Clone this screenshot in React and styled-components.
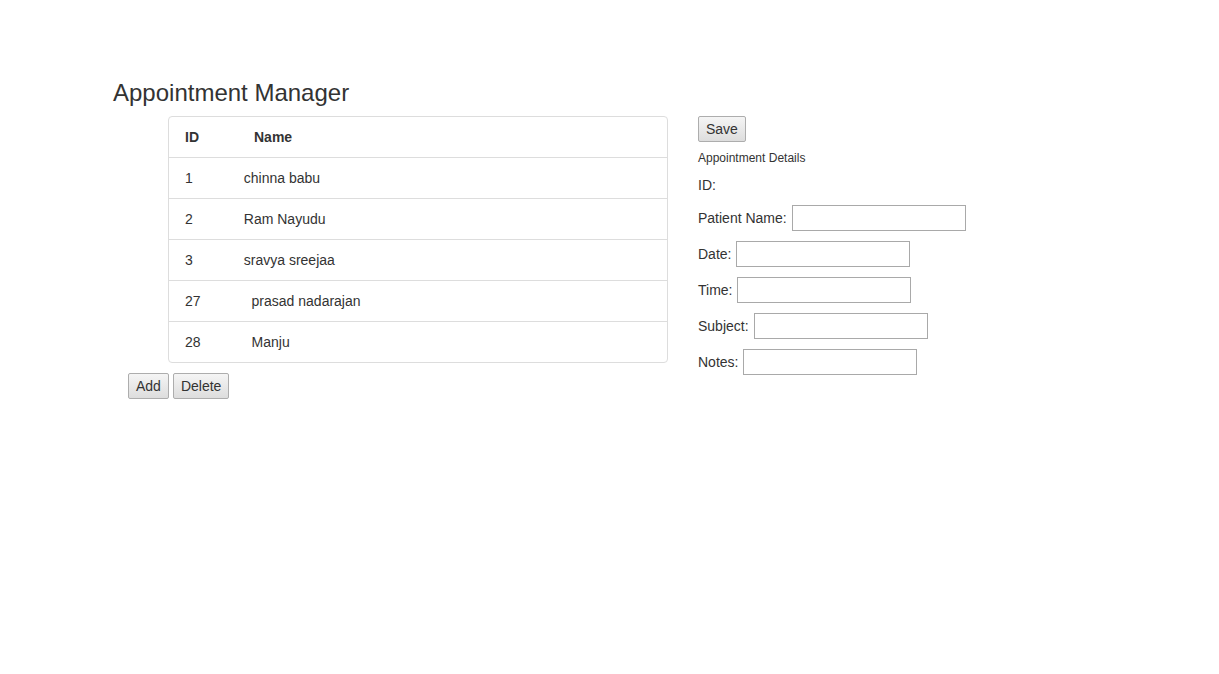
import React from "react";
import styled, { createGlobalStyle } from "styled-components";

const Global = createGlobalStyle`
  html, body { margin: 0; padding: 0; background: #fff; }
  body {
    font-family: "Liberation Sans", Arial, Helvetica, sans-serif;
    font-size: 14px;
    line-height: 20px;
    color: #333;
  }
  * { box-sizing: border-box; }
`;

const Page = styled.div`
  padding: 80px 0 0 113px;
`;

const Title = styled.h1`
  margin: 0 0 10px 0;
  font-size: 24px;
  font-weight: 400;
  line-height: 26px;
  color: #333;
`;

const Columns = styled.div`
  display: flex;
  align-items: flex-start;
`;

const LeftCol = styled.div`
  display: flex;
  flex-direction: column;
  padding-left: 15px;
`;

const TableBox = styled.div`
  margin-left: 40px;
  width: 500px;
  border: 1px solid #ddd;
  border-radius: 4px;
  overflow: hidden;
`;

const Row = styled.div`
  display: flex;
  align-items: center;
  gap: ${(p) => (p.$head ? "55px" : "51px")};
  height: ${(p) => (p.$head ? "40px" : "41px")};
  padding-left: 16px;
  border-top: ${(p) => (p.$head ? "none" : "1px solid #ddd")};
  font-weight: ${(p) => (p.$head ? 700 : 400)};
`;

const Cell = styled.span`
  white-space: nowrap;
`;

const ButtonRow = styled.div`
  display: flex;
  gap: 4px;
  margin-top: 10px;
`;

const Btn = styled.button`
  height: 26px;
  padding: 0 7px;
  font-family: "Liberation Sans", Arial, sans-serif;
  font-size: 14px;
  color: #333;
  background: linear-gradient(#f5f5f5, #dddddd);
  border: 1px solid #adadad;
  border-radius: 2px;
  cursor: pointer;
`;

const RightCol = styled.div`
  display: flex;
  flex-direction: column;
  align-items: flex-start;
  margin-left: 30px;
`;

const Caption = styled.div`
  font-size: 12px;
  line-height: 17px;
  margin-top: 8px;
`;

const IdLine = styled.div`
  margin-top: 8px;
  line-height: 20px;
`;

const FieldList = styled.div`
  display: flex;
  flex-direction: column;
  gap: 10px;
  margin-top: 10px;
`;

const Field = styled.label`
  display: flex;
  align-items: center;
  gap: 5px;
  height: 26px;
`;

const Input = styled.input`
  width: 174px;
  height: 26px;
  margin: 0;
  border: 1px solid #a9a9a9;
  font-family: "Liberation Sans", Arial, sans-serif;
  font-size: 14px;
  padding: 2px 4px;
  background: #fff;
`;

const rows = [
  { id: "1", name: "chinna babu" },
  { id: "2", name: "Ram Nayudu" },
  { id: "3", name: "sravya sreejaa" },
  { id: "27", name: "prasad nadarajan" },
  { id: "28", name: "Manju" },
];

const fields = ["Patient Name:", "Date:", "Time:", "Subject:", "Notes:"];

export default function App() {
  return (
    <>
      <Global />
      <Page>
        <Title>Appointment Manager</Title>
        <Columns>
          <LeftCol>
            <TableBox>
              <Row $head>
                <Cell>ID</Cell>
                <Cell>Name</Cell>
              </Row>
              {rows.map((r) => (
                <Row key={r.id}>
                  <Cell>{r.id}</Cell>
                  <Cell>{r.name}</Cell>
                </Row>
              ))}
            </TableBox>
            <ButtonRow>
              <Btn>Add</Btn>
              <Btn>Delete</Btn>
            </ButtonRow>
          </LeftCol>
          <RightCol>
            <Btn>Save</Btn>
            <Caption>Appointment Details</Caption>
            <IdLine>ID:</IdLine>
            <FieldList>
              {fields.map((f) => (
                <Field key={f}>
                  <span>{f}</span>
                  <Input type="text" />
                </Field>
              ))}
            </FieldList>
          </RightCol>
        </Columns>
      </Page>
    </>
  );
}
